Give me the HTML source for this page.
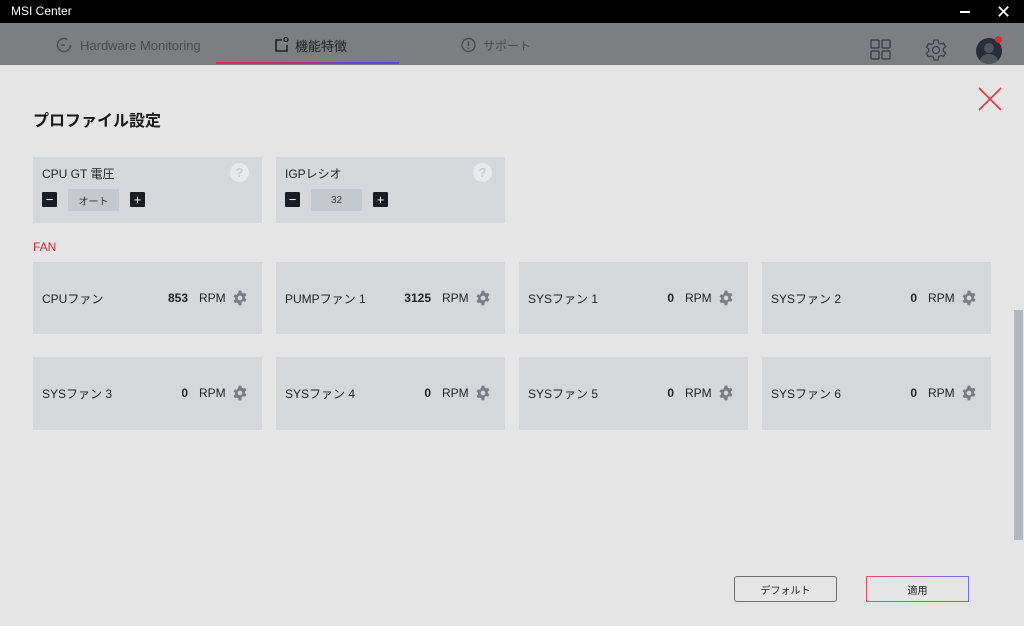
<!DOCTYPE html>
<html><head><meta charset="utf-8"><style>
*{margin:0;padding:0;box-sizing:border-box}
body{width:1024px;height:626px;overflow:hidden;background:#e5e5e5;font-family:"Liberation Sans","Noto Sans CJK JP",sans-serif;color:#222;position:relative}
.a{position:absolute}
.c{display:flex;align-items:center;justify-content:center}
.title{left:0;top:0;width:1024px;height:23px;background:#000;color:#fff;font-size:12px;line-height:23px;padding-left:11px}
.hdr{left:0;top:23px;width:1024px;height:42px;background:#7c7e82}
.tab{font-size:13px;color:#4a4b4f;top:36px;height:18px;display:flex;align-items:center}
.card{background:#d5d7db}
.fl{font-size:12px;color:#222;height:16px;display:flex;align-items:center}
.num{font-weight:bold;font-size:12px;height:16px;display:flex;align-items:center}
.btn{width:15px;height:15px;background:#1a1d24;color:#fff;font-size:13px;border-radius:1px}
.val{width:51px;height:22px;background:#c5c8cd;font-size:10px;color:#333}
.q{width:19px;height:19px;border-radius:50%;background:#e8e9ea;color:#c9cbce;font-size:13px;font-weight:bold}
</style></head><body>
<div class="a title">MSI Center</div>
<div class="a" style="left:960px;top:11px;width:10px;height:2px;background:#fff"></div>
<div class="a" style="left:996px;top:2px;color:#fff;font-size:18px">✕</div>
<div class="a hdr"></div>
<svg class="a" style="left:56px;top:37px" width="16" height="16"><circle cx="8" cy="8" r="6.5" fill="none" stroke="#4a4b4f" stroke-width="1.4" stroke-dasharray="34 7"/><path d="M5 8h4" stroke="#4a4b4f" stroke-width="1.4"/></svg>
<div class="a tab" style="left:80px">Hardware Monitoring</div>
<svg class="a" style="left:272px;top:36px" width="18" height="18"><path d="M10 4H4v11h11V9" fill="none" stroke="#222" stroke-width="1.6"/><circle cx="14" cy="3.5" r="2" fill="none" stroke="#222" stroke-width="1.3"/></svg>
<div class="a tab" style="left:295px;color:#222">機能特徴</div>
<div class="a" style="left:216px;top:62px;width:183px;height:2px;background:linear-gradient(90deg,#d03050,#5050c8)"></div>
<svg class="a" style="left:460px;top:37px" width="17" height="17"><circle cx="8.5" cy="8" r="6.5" fill="none" stroke="#4a4b4f" stroke-width="1.4"/><path d="M8.5 4.5v4.5M8.5 10.5v1.5" stroke="#4a4b4f" stroke-width="1.5"/></svg>
<div class="a tab" style="left:483px;font-size:12px">サポート</div>
<svg class="a" style="left:870px;top:39px" width="22" height="22" fill="none" stroke="#3e4045" stroke-width="1.4"><rect x="1" y="1" width="8" height="8" rx="1"/><rect x="12" y="1" width="8" height="8" rx="1"/><rect x="1" y="12" width="8" height="8" rx="1"/><rect x="12" y="12" width="8" height="8" rx="1"/></svg>
<svg class="a" style="left:924px;top:38px" width="24" height="24" viewBox="0 0 24 24" fill="none" stroke="#3e4045" stroke-width="1.3"><path d="M10 2h4l.6 2.8 2.2 1.3 2.7-.9 2 3.4-2.1 1.9v2.6l2.1 1.9-2 3.4-2.7-.9-2.2 1.3L14 22h-4l-.6-2.8-2.2-1.3-2.7.9-2-3.4 2.1-1.9v-2.6L2.5 9l2-3.4 2.7.9 2.2-1.3z"/><circle cx="12" cy="12" r="3.5"/></svg>
<div class="a" style="left:976px;top:38px;width:26px;height:26px;border-radius:50%;background:#2a2d35;overflow:hidden"><div class="a" style="left:8px;top:5px;width:10px;height:10px;border-radius:50%;background:#50545c"></div><div class="a" style="left:4px;top:16px;width:18px;height:14px;border-radius:50%;background:#50545c"></div></div>
<div class="a" style="left:995px;top:36px;width:7px;height:7px;border-radius:50%;background:#d8283c"></div>
<svg class="a" style="left:978px;top:87px" width="24" height="24"><path d="M1 1l22 22M23 1L1 23" stroke="#e03848" stroke-width="1.6"/></svg>
<div class="a" style="left:33px;top:107px;font-size:16px;font-weight:bold;color:#1a1a1a">プロファイル設定</div>

<div class="a card" style="left:33px;top:157px;width:229px;height:66px"></div>
<div class="a fl" style="left:42px;top:165px">CPU GT 電圧</div>
<div class="a q c" style="left:230px;top:163px">?</div>
<div class="a btn c" style="left:42px;top:192px">−</div>
<div class="a val c" style="left:68px;top:189px">オート</div>
<div class="a btn c" style="left:130px;top:192px">+</div>
<div class="a card" style="left:276px;top:157px;width:229px;height:66px"></div>
<div class="a fl" style="left:285px;top:165px">IGPレシオ</div>
<div class="a q c" style="left:473px;top:163px">?</div>
<div class="a btn c" style="left:285px;top:192px">−</div>
<div class="a val c" style="left:311px;top:189px">32</div>
<div class="a btn c" style="left:373px;top:192px">+</div>

<div class="a" style="left:33px;top:240px;font-size:12px;color:#d8283c">FAN</div>

<svg width="0" height="0" style="position:absolute"><defs><symbol id="g" viewBox="0 0 24 24"><path fill="#7a7d83" fill-rule="evenodd" d="M10 1h4l.6 3 2.2 1.3 2.9-1 2 3.4-2.3 2v2.6l2.3 2-2 3.4-2.9-1-2.2 1.3L14 23h-4l-.6-3-2.2-1.3-2.9 1-2-3.4 2.3-2v-2.6l-2.3-2 2-3.4 2.9 1L9.4 4zM12 8.5a3.5 3.5 0 1 0 0 7a3.5 3.5 0 1 0 0-7z"/></symbol></defs></svg>

<div id="fans"></div>
<script>
var f=[["CPUファン","853"],["PUMPファン 1","3125"],["SYSファン 1","0"],["SYSファン 2","0"],["SYSファン 3","0"],["SYSファン 4","0"],["SYSファン 5","0"],["SYSファン 6","0"]];
var h="";
f.forEach(function(d,i){var x=33+243*(i%4),y=i<4?262:357,hh=i<4?72:73,cy=y+36;
h+='<div class="a card" style="left:'+x+'px;top:'+y+'px;width:229px;height:'+hh+'px"></div>';
h+='<div class="a fl" style="left:'+(x+9)+'px;top:'+(cy-8)+'px">'+d[0]+'</div>';
h+='<div class="a num" style="right:'+(1024-(x+155))+'px;top:'+(cy-8)+'px">'+d[1]+'</div>';
h+='<div class="a fl" style="left:'+(x+166)+'px;top:'+(cy-8)+'px">RPM</div>';
h+='<svg class="a" style="left:'+(x+199)+'px;top:'+(cy-8)+'px" width="16" height="16"><use href="#g"/></svg>';});
document.getElementById("fans").innerHTML=h;
</script>

<div class="a" style="left:1014px;top:310px;width:9px;height:230px;background:#b1b7c1"></div>
<div class="a c" style="left:734px;top:576px;width:103px;height:26px;border:1px solid #6c6e72;border-radius:3px;font-size:10px">デフォルト</div>
<div class="a c" style="left:866px;top:576px;width:103px;height:26px;border:1px solid;border-image:linear-gradient(90deg,#e0506a,#7070e0) 1;font-size:10px">適用</div>
</body></html>
